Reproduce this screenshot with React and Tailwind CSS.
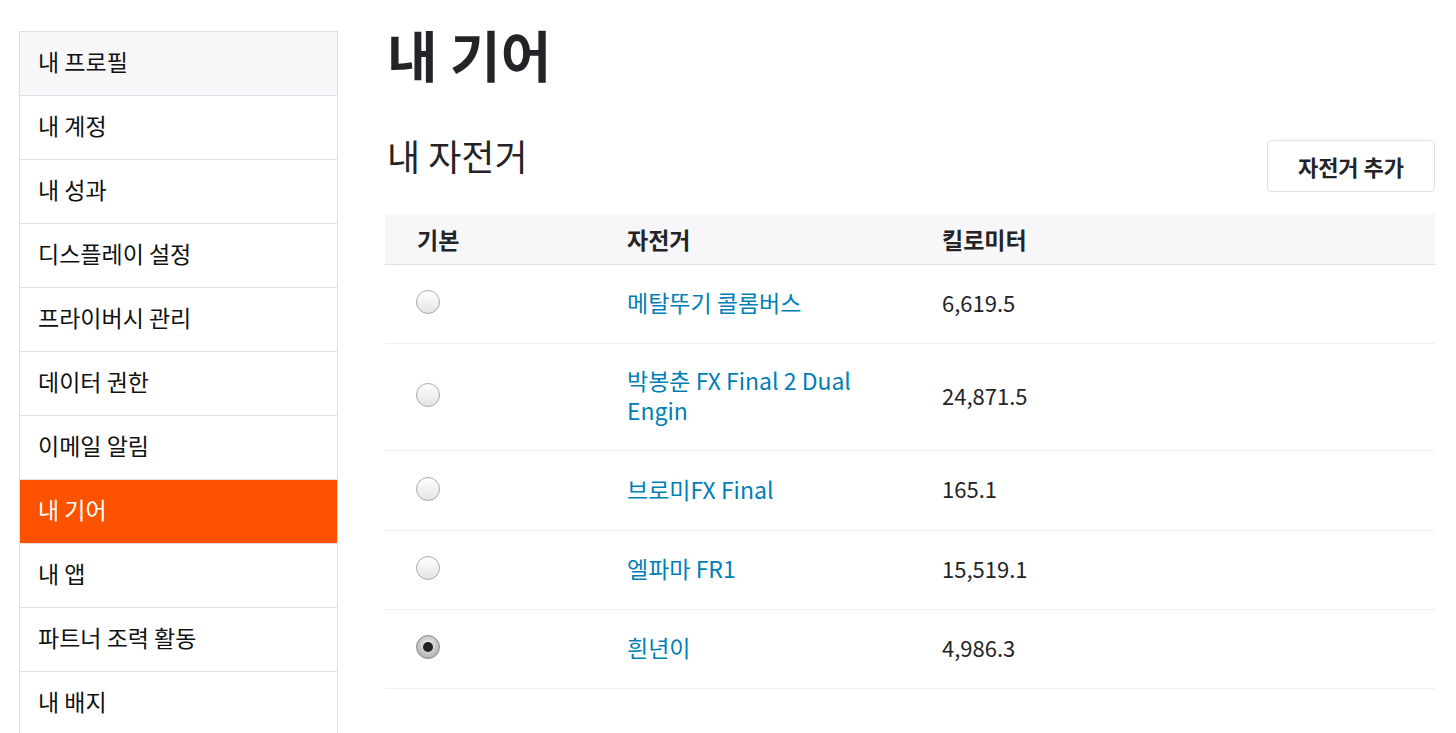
const menu = [
  "내 프로필",
  "내 계정",
  "내 성과",
  "디스플레이 설정",
  "프라이버시 관리",
  "데이터 권한",
  "이메일 알림",
  "내 기어",
  "내 앱",
  "파트너 조력 활동",
  "내 배지",
];

const bikes = [
  { name: "메탈뚜기 콜롬버스", km: "6,619.5", h: "h-[79px]" },
  { name: "박봉춘 FX Final 2 Dual Engin", km: "24,871.5", h: "h-[107px]" },
  { name: "브로미FX Final", km: "165.1", h: "h-[80px]" },
  { name: "엘파마 FR1", km: "15,519.1", h: "h-[79px]" },
  { name: "흰년이", km: "4,986.3", h: "h-[79px]", checked: true },
];

const Radio = ({ checked }) =>
  checked ? (
    <span className="w-6 h-6 rounded-full border border-[#8a8a8a] bg-[radial-gradient(circle_at_50%_40%,#f4f4f4,#9c9c9c)] flex items-center justify-center">
      <span className="w-[10px] h-[10px] rounded-full bg-[#222]" />
    </span>
  ) : (
    <span className="w-6 h-6 rounded-full border border-[#a9a9a9] bg-gradient-to-b from-white to-[#e4e4e4]" />
  );

const App = () => {
  return (
    <div className="h-[733px] bg-white flex font-['Noto_Sans_CJK_KR',sans-serif] text-[#242428] overflow-hidden">
      <aside className="ml-[19px] mt-[31px] w-[319px] shrink-0 border border-b-0 border-[#dfdfe8] self-start">
        {menu.map((item, i) => (
          <div
            key={item}
            className={
              "h-[64px] flex items-center px-[18px] pb-[5px] text-[23px] border-b border-[#dfdfe8] " +
              (item === "내 기어"
                ? "bg-[#fc5200] text-white"
                : i === 0
                ? "bg-[#f7f7fa] text-[#111]"
                : "bg-white text-[#111]")
            }
          >
            {item}
          </div>
        ))}
      </aside>

      <main className="ml-[47px] w-[1050px] shrink-0">
        <h1 className="text-[55px] font-bold leading-none mt-[26px] ml-[2px]">내 기어</h1>

        <div className="flex items-start justify-between mt-[59px]">
          <h2 className="text-[36px] leading-none ml-[2px] -mt-[3px]">내 자전거</h2>
          <button className="w-[168px] h-[52px] border border-[#dfdfe8] rounded-[4px] text-[22px] font-bold bg-white">
            자전거 추가
          </button>
        </div>

        <div className="mt-[22px]">
          <div className="h-[51px] bg-[#f7f7fa] border-b border-[#dfdfe8] grid grid-cols-[226px_331px_1fr] items-center text-[23px] font-bold">
            <div className="pl-[32px]">기본</div>
            <div className="pl-[16px]">자전거</div>
            <div>킬로미터</div>
          </div>
          {bikes.map((b) => (
            <div
              key={b.name}
              className={"grid grid-cols-[226px_331px_1fr] items-center border-b border-[#eeeeee] text-[23px] pb-[4px] " + b.h}
            >
              <div className="pl-[31px] flex">
                <Radio checked={b.checked} />
              </div>
              <div className="pl-[16px] pr-[40px] text-[#007fb6] leading-[30px]">{b.name}</div>
              <div className="text-[22px]">{b.km}</div>
            </div>
          ))}
        </div>
      </main>
    </div>
  );
};

export default App;
